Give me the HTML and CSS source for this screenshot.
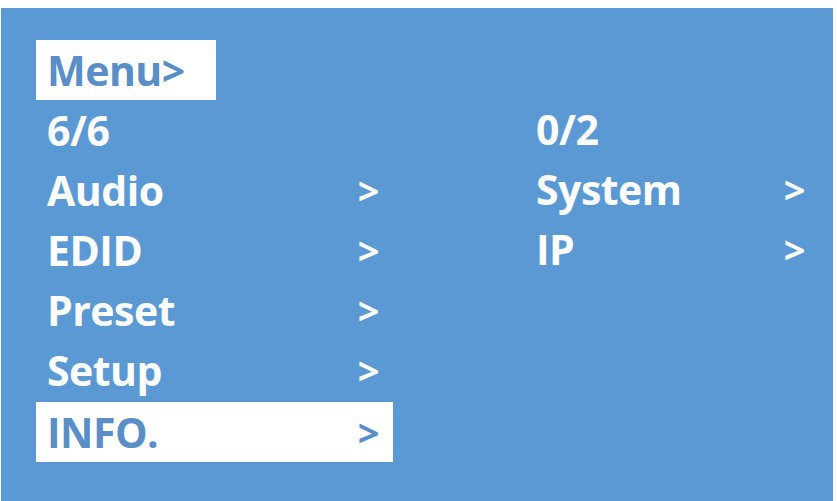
FILE: index.html
```html
<!DOCTYPE html>
<html>
<head>
<meta charset="utf-8">
<link rel="stylesheet" href="styles.css">
</head>
<body>
<div class="panel">
  <div class="col col-left">
    <div class="row hl title"><span class="label">Menu&gt;</span></div>
    <div class="row"><span class="label">6/6</span></div>
    <div class="row"><span class="label">Audio</span><span class="arrow">&gt;</span></div>
    <div class="row"><span class="label">EDID</span><span class="arrow">&gt;</span></div>
    <div class="row"><span class="label">Preset</span><span class="arrow">&gt;</span></div>
    <div class="row"><span class="label">Setup</span><span class="arrow">&gt;</span></div>
    <div class="row hl"><span class="label">INFO.</span><span class="arrow">&gt;</span></div>
  </div>
  <div class="col col-right">
    <div class="row"></div>
    <div class="row"><span class="label">0/2</span></div>
    <div class="row"><span class="label">System</span><span class="arrow">&gt;</span></div>
    <div class="row"><span class="label">IP</span><span class="arrow">&gt;</span></div>
  </div>
</div>
</body>
</html>
```

FILE: styles.css
```css
html, body {
  margin: 0;
  padding: 0;
  background: #ffffff;
}
body {
  width: 837px;
  height: 501px;
  overflow: hidden;
}
.panel {
  margin: 8px 0 0 1px;
  width: 832px;
  height: 493px;
  background: #5b99d5;
  box-sizing: border-box;
  padding: 31px 0 0 35px;
  display: flex;
  gap: 132px;
  font-family: "Open Sans", "Noto Sans", sans-serif;
  font-weight: 700;
  font-size: 41px;
  color: #fbfdff;
}
.col {
  display: flex;
  flex-direction: column;
}
.col-left {
  width: 357px;
}
.col-right {
  width: 294px;
}
.row {
  height: 60px;
  line-height: 60px;
  display: flex;
  justify-content: space-between;
  padding: 0 14px 0 11px;
  box-sizing: border-box;
  letter-spacing: -0.5px;
}
.arrow {
  font-size: 38px;
}
.hl {
  background: #ffffff;
  color: #5a8ec8;
}
.title {
  width: 180px;
  margin-top: 1px;
}
.col-left .row:last-child {
  margin-top: 2px;
}
```
